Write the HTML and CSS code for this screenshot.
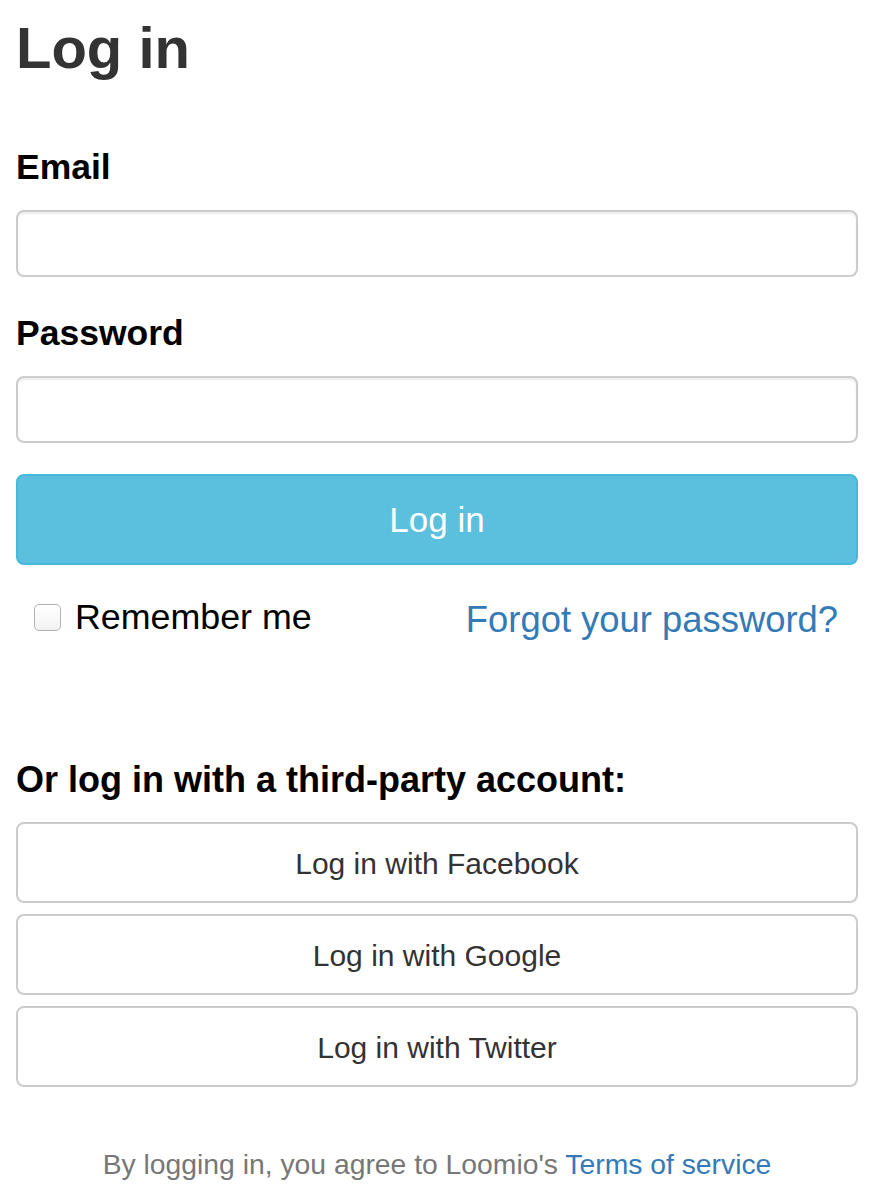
FILE: index.html
```html
<!DOCTYPE html>
<html lang="en">
<head>
    <meta charset="UTF-8">
    <title>Log in</title>
    <link rel="stylesheet" href="styles.css">
</head>
<body>
    <div class="login">
        <h1 class="title">Log in</h1>

        <form class="login-form">
            <label class="field-label" for="email">Email</label>
            <input class="field-input" type="email" id="email">

            <label class="field-label" for="password">Password</label>
            <input class="field-input" type="password" id="password">

            <button type="submit" class="btn-primary">Log in</button>

            <div class="form-row">
                <label class="remember">
                    <input type="checkbox" class="remember-box">
                    <span>Remember me</span>
                </label>
                <a href="#" class="forgot">Forgot your password?</a>
            </div>
        </form>

        <h2 class="third-party-title">Or log in with a third-party account:</h2>
        <div class="providers">
            <button class="btn-provider">Log in with Facebook</button>
            <button class="btn-provider">Log in with Google</button>
            <button class="btn-provider">Log in with Twitter</button>
        </div>

        <p class="terms">By logging in, you agree to Loomio's <a href="#">Terms of service</a></p>
    </div>
</body>
</html>
```

FILE: styles.css
```css
body {
    margin: 0;
    background-color: #fff;
    color: #000;
    font-family: "Liberation Sans", Arial, Helvetica, sans-serif;
}
.login {
    padding: 16px 16px 0 16px;
}
.title {
    margin: 0;
    font-size: 58px;
    line-height: 64px;
    font-weight: bold;
    color: #333;
}
.login-form {
    display: flex;
    flex-direction: column;
}
.field-label {
    display: block;
    margin-top: 36px;
    margin-bottom: 23px;
    font-size: 35.5px;
    line-height: 40px;
    font-weight: bold;
}
.login-form .field-label:first-child {
    margin-top: 67px;
}
.field-input {
    box-sizing: border-box;
    width: 100%;
    height: 67px;
    margin: 0;
    padding: 8px 20px;
    border: 2px solid #ccc;
    border-radius: 8px;
    box-shadow: inset 0 2px 2px rgba(0, 0, 0, 0.075);
    font-family: inherit;
    font-size: 30px;
}
.btn-primary {
    box-sizing: border-box;
    width: 100%;
    height: 91px;
    margin-top: 31px;
    border: 2px solid #46b8da;
    border-radius: 8px;
    background-color: #5bc0de;
    color: #fff;
    font-family: inherit;
    font-size: 35px;
    cursor: pointer;
}
.form-row {
    display: flex;
    justify-content: space-between;
    align-items: flex-start;
    margin-top: 30px;
    padding: 0 20px 0 18px;
}
.remember {
    display: flex;
    align-items: center;
    gap: 14px;
    padding-top: 2px;
    font-size: 35.8px;
    line-height: 40px;
}
.remember-box {
    appearance: none;
    -webkit-appearance: none;
    box-sizing: border-box;
    width: 27px;
    height: 27px;
    margin: 0;
    border: 1px solid #b3b3b3;
    border-radius: 5px;
    background: linear-gradient(#fff, #f3f3f3);
}
.forgot {
    padding-top: 5px;
    font-size: 36.4px;
    line-height: 40px;
    color: #337ab7;
    text-decoration: none;
}
.third-party-title {
    margin: 120px 0 22px 0;
    font-size: 36px;
    line-height: 40px;
    font-weight: bold;
}
.providers {
    display: flex;
    flex-direction: column;
    gap: 11px;
}
.btn-provider {
    box-sizing: border-box;
    width: 100%;
    height: 81px;
    padding-top: 3px;
    border: 2px solid #ccc;
    border-radius: 8px;
    background-color: #fff;
    color: #333;
    font-family: inherit;
    font-size: 30px;
    cursor: pointer;
}
.terms {
    margin: 57px 0 0 0;
    text-align: center;
    font-size: 28.3px;
    line-height: 40px;
    color: #777;
}
.terms a {
    color: #337ab7;
    text-decoration: none;
}
```
